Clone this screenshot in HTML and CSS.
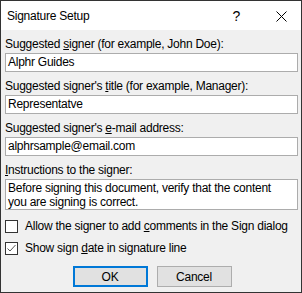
FILE: index.html
```html
<!DOCTYPE html>
<html>
<head>
<meta charset="utf-8">
<link rel="stylesheet" href="styles.css">
</head>
<body>
<div class="window">
  <div class="titlebar">
    <span class="title">Signature Setup</span>
    <span class="help">?</span>
    <svg class="close" width="11" height="11" viewBox="0 0 11 11"><path d="M0.5 0.5 L10.5 10.5 M10.5 0.5 L0.5 10.5" stroke="#000" stroke-width="1" fill="none"/></svg>
  </div>
  <div class="content">
    <div class="field">
      <div class="label">Suggested <u>s</u>igner (for example, John Doe):</div>
      <div class="box">Alphr Guides</div>
    </div>
    <div class="field">
      <div class="label">Suggested signer's <u>t</u>itle (for example, Manager):</div>
      <div class="box">Representatve</div>
    </div>
    <div class="field">
      <div class="label">Suggested signer's <u>e</u>-mail address:</div>
      <div class="box">alphrsample@email.com</div>
    </div>
    <div class="field">
      <div class="label"><u>I</u>nstructions to the signer:</div>
      <div class="box multi">Before signing this document, verify that the content you are signing is correct.</div>
    </div>
    <div class="check">
      <span class="cb"></span>
      <span class="ctext">Allow the signer to add <u>c</u>omments in the Sign dialog</span>
    </div>
    <div class="check">
      <span class="cb"><svg width="11" height="11" viewBox="0 0 11 11"><path d="M1.5 5.5 L4 8 L9.5 2" stroke="#555" stroke-width="1" fill="none"/></svg></span>
      <span class="ctext">Show sign <u>d</u>ate in signature line</span>
    </div>
    <div class="buttons">
      <div class="btn default">OK</div>
      <div class="btn">Cancel</div>
    </div>
  </div>
</div>
</body>
</html>
```

FILE: styles.css
```css
* { box-sizing: border-box; }
html, body { margin: 0; padding: 0; }
body {
  font-family: "Liberation Sans", Arial, sans-serif;
  font-size: 12px;
  letter-spacing: -0.25px;
  color: #000;
  background: #f0f0f0;
}
u { text-decoration: underline; text-underline-offset: 1px; }
.window {
  width: 302px;
  height: 293px;
  border: 1px solid #333;
  background: #f0f0f0;
  display: flex;
  flex-direction: column;
}
.titlebar {
  height: 29px;
  background: #fff;
  display: flex;
  align-items: center;
  padding-left: 6px;
  flex-shrink: 0;
}
.title { font-size: 12px; flex: 1; padding-top: 1px; }
.help { font-size: 14px; margin-right: 36px; padding-top: 1px; }
.close { margin-right: 14px; margin-top: 1px; }
.content {
  padding: 7px 3px 0 4px;
  display: flex;
  flex-direction: column;
}
.field { display: flex; flex-direction: column; margin-bottom: 7px; }
.label { line-height: 15px; height: 15px; margin-bottom: 1px; }
.box {
  height: 19px;
  border: 1px solid #acacac;
  background: #fff;
  padding: 1px 2px;
  line-height: 15px;
}
.box.multi { height: 31px; line-height: 14px; padding-right: 14px; }
.check {
  display: flex;
  align-items: center;
  height: 13px;
  margin-bottom: 9px;
  line-height: 13px;
}
.ctext { white-space: nowrap; }
.field + .check { margin-top: 3px; }
.cb {
  width: 13px;
  height: 13px;
  border: 1px solid #333;
  background: #fff;
  margin-right: 7px;
  display: flex;
  align-items: center;
  justify-content: center;
  flex-shrink: 0;
}
.buttons {
  display: flex;
  justify-content: center;
  gap: 9px;
  margin-top: 2px;
  padding-left: 1px;
}
.btn {
  width: 75px;
  height: 21px;
  background: #e1e1e1;
  border: 1px solid #adadad;
  display: flex;
  align-items: center;
  justify-content: center;
}
.btn.default { border: 2px solid #0078d7; }
```
